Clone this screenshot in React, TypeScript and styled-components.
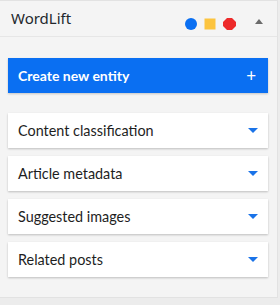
import React from 'react'
import styled, { createGlobalStyle } from 'styled-components'

const GlobalStyle = createGlobalStyle`
  html, body {
    margin: 0;
    padding: 0;
    background: #ececec;
  }
  * {
    box-sizing: border-box;
  }
`

const Panel = styled.div`
  width: 278px;
  height: 298px;
  background: #f4f4f4;
  border-top: 1px solid #e2e2e2;
  border-right: 1px solid #e2e2e2;
  border-bottom: 1px solid #e2e2e2;
  font-family: Lato, 'Noto Sans', sans-serif;
`

const Header = styled.div`
  height: 36px;
  display: flex;
  align-items: center;
  padding: 0 14px 0 11px;
  border-bottom: 1px solid #e6e6e6;
`

const Title = styled.div`
  flex: 1;
  font-family: 'Noto Sans', sans-serif;
  font-size: 15px;
  color: #23282d;
  margin-top: -1px;
`

const Shapes = styled.div`
  display: flex;
  align-items: center;
  gap: 7px;
  margin-right: 19px;
  margin-top: 10px;
`

const Toggle = styled.div`
  width: 0;
  height: 0;
  border-left: 4px solid transparent;
  border-right: 4px solid transparent;
  border-bottom: 5px solid #6b6b6b;
  margin-top: 6px;
`

const Body = styled.div`
  padding: 21px 9px 0 8px;
  display: flex;
  flex-direction: column;
  gap: 8px;
`

const CreateButton = styled.div`
  height: 35px;
  background: #0a6ff2;
  color: #fff;
  display: flex;
  align-items: center;
  justify-content: space-between;
  padding: 0 10px;
  font-size: 14px;
  font-weight: 700;
  box-shadow: 0 1px 2px rgba(0, 0, 0, 0.2);
  margin-bottom: 12px;
`

const Plus = styled.span`
  font-size: 17px;
  font-weight: 400;
  margin-right: 2px;
`

const Card = styled.div`
  height: 35px;
  background: #fff;
  display: flex;
  align-items: center;
  justify-content: space-between;
  padding: 0 10px;
  font-size: 14.4px;
  color: #1e1e1e;
  box-shadow: 0 1px 2px rgba(0, 0, 0, 0.22);
`

const Caret = styled.div`
  width: 0;
  height: 0;
  border-left: 5px solid transparent;
  border-right: 5px solid transparent;
  border-top: 5px solid #1a73e8;
`

const sections = ['Content classification', 'Article metadata', 'Suggested images', 'Related posts']

export default function App() {
  return (
    <>
      <GlobalStyle />
      <Panel>
        <Header>
          <Title>WordLift</Title>
          <Shapes>
            <svg width="12" height="12" viewBox="0 0 12 12">
              <circle cx="6" cy="6" r="6" fill="#0a6ff2" />
            </svg>
            <svg width="12" height="12" viewBox="0 0 12 12">
              <rect x="0.5" y="0.5" width="11" height="11" fill="#fcc43e" />
            </svg>
            <svg width="13" height="12" viewBox="0 0 13 12">
              <polygon points="4,0 9,0 13,4 13,8 9,12 4,12 0,8 0,4" fill="#ed2a2a" />
            </svg>
          </Shapes>
          <Toggle />
        </Header>
        <Body>
          <CreateButton>
            Create new entity
            <Plus>+</Plus>
          </CreateButton>
          {sections.map((s) => (
            <Card key={s}>
              {s}
              <Caret />
            </Card>
          ))}
        </Body>
      </Panel>
    </>
  )
}
